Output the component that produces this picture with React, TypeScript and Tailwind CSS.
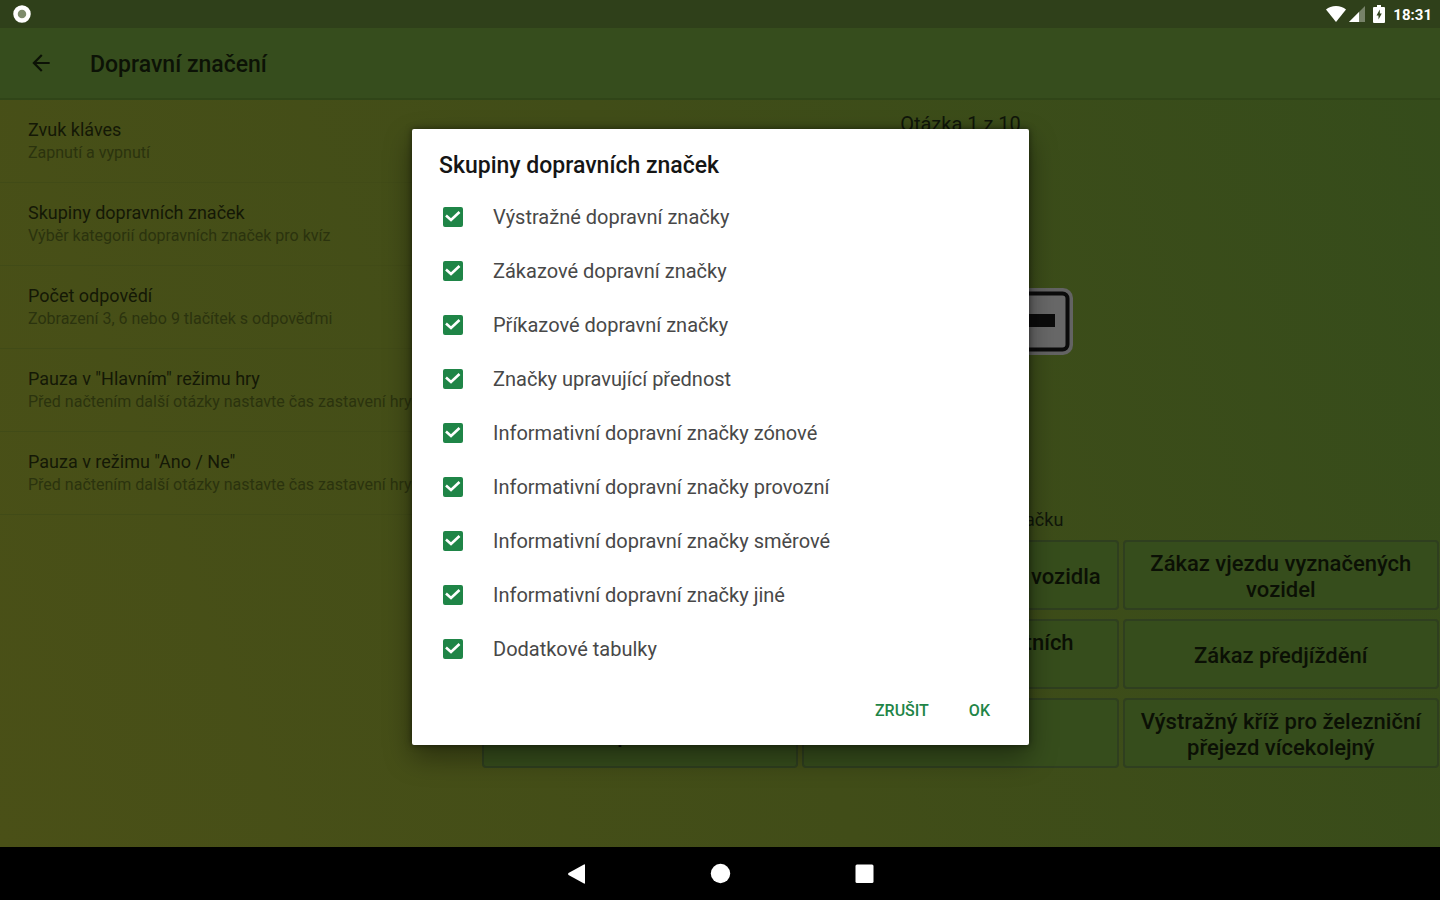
import { useState } from "react";

const settings = [
  { title: "Zvuk kláves", summary: "Zapnutí a vypnutí" },
  { title: "Skupiny dopravních značek", summary: "Výběr kategorií dopravních značek pro kvíz" },
  { title: "Počet odpovědí", summary: "Zobrazení 3, 6 nebo 9 tlačítek s odpověďmi" },
  { title: "Pauza v \"Hlavním\" režimu hry", summary: "Před načtením další otázky nastavte čas zastavení hry" },
  { title: "Pauza v režimu \"Ano / Ne\"", summary: "Před načtením další otázky nastavte čas zastavení hry" },
];

// empty entries keep their cell in the 3x3 grid
const answers = [
  "",
  "Výjimka pro nákladní vozidla",
  "Zákaz vjezdu vyznačených vozidel",
  "",
  "Zákaz vjezdu ostatních\nvozidel",
  "Zákaz předjíždění",
  "Slepá ulice",
  "",
  "Výstražný kříž pro železniční přejezd vícekolejný",
];

const groups = [
  "Výstražné dopravní značky",
  "Zákazové dopravní značky",
  "Příkazové dopravní značky",
  "Značky upravující přednost",
  "Informativní dopravní značky zónové",
  "Informativní dopravní značky provozní",
  "Informativní dopravní značky směrové",
  "Informativní dopravní značky jiné",
  "Dodatkové tabulky",
];

function StatusBar() {
  return (
    <div className="flex h-7 items-center justify-between bg-[#2f401a] pl-3 pr-2 text-white">
      <svg width="20" height="20" viewBox="0 0 20 20" aria-hidden="true">
        <circle cx="10" cy="10" r="6.5" fill="#7e8c6c" stroke="#fff" strokeWidth="4.5" />
      </svg>
      <div className="flex items-center">
        <svg width="22" height="18" viewBox="0 0 22 18" fill="#fff" aria-hidden="true">
          <path d="M11 17 1 4.500C3.500 2.200 7 1 11 1s7.500 1.200 10 3.500z" />
        </svg>
        <svg className="ml-[2px]" width="16" height="16" viewBox="0 0 16 16" aria-hidden="true">
          <path d="M16 0v16H0z" fill="#fff" opacity="0.35" />
          <path d="M10 6v10H0z" fill="#fff" />
        </svg>
        <svg className="mx-2" width="12" height="18" viewBox="0 0 12 18" aria-hidden="true">
          <path d="M4 0h4v2h3q1 0 1 1v14q0 1-1 1H1q-1 0-1-1V3q0-1 1-1h3z" fill="#fff" />
          <path d="M6.800 4.500 3.500 10.500h2v4l3.300-6h-2z" fill="#2f401a" />
        </svg>
        <span className="pt-px text-[15px] leading-5 font-bold">18:31</span>
      </div>
    </div>
  );
}

function AppBar() {
  return (
    <header className="flex h-[72px] items-center border-b-2 border-[#304518] bg-[#364d1d] px-7">
      <button type="button" aria-label="Zpět" className="text-[#0c1206]">
        <svg width="26" height="26" viewBox="0 0 24 24" fill="currentColor" aria-hidden="true">
          <path d="M20 11H7.830l5.590-5.590L12 4l-8 8 8 8 1.410-1.410L7.830 13H20z" />
        </svg>
      </button>
      <h1 className="ml-9 pt-1 text-[23px] leading-7 font-medium text-[#0c1206]">Dopravní značení</h1>
    </header>
  );
}

function Settings() {
  return (
    <nav className="w-1/3 shrink-0">
      {settings.map((item) => (
        <button
          key={item.title}
          type="button"
          className="block h-[83px] w-full border-b border-[#414b17] pl-7 text-left whitespace-nowrap"
        >
          <span className="block text-lg leading-6 text-[#141806]">{item.title}</span>
          <span className="block text-base leading-[22px] text-[#2b330e]">{item.summary}</span>
        </button>
      ))}
    </nav>
  );
}

function Quiz() {
  return (
    <main className="flex flex-1 flex-col pt-3 pr-px pb-[79px] pl-[2px] text-center text-[#10160a]">
      <p className="text-xl leading-6">Otázka 1 z 10</p>
      <div className="flex flex-1 items-center justify-center">
        <svg width="226" height="68" viewBox="0 0 226 68" aria-hidden="true">
          <rect width="225" height="67" rx="10" fill="#636363" />
          <rect x="5.500" y="5.500" width="214" height="56" rx="5" fill="#686868" stroke="#0b0b0b" strokeWidth="4" />
          <rect x="18" y="26" width="189" height="13" fill="#0b0b0b" />
        </svg>
      </div>
      <p className="mb-2 text-lg leading-6">Označte správnou značku</p>
      <div className="grid grid-cols-3 gap-x-1 gap-y-[9px]">
        {answers.map((answer, i) => (
          <button
            key={i}
            type="button"
            className="h-[70px] rounded border-2 border-[#2f3f1f] bg-[#364d1c] px-2 pt-1 text-[22px] leading-[26px] font-medium whitespace-pre-line text-[#0b1005]"
          >
            {answer}
          </button>
        ))}
      </div>
    </main>
  );
}

function GroupRow({ label }: { label: string }) {
  const [checked, setChecked] = useState(true);

  return (
    <label className="flex h-[54px] items-center gap-[30px] pl-[31px]">
      <span className="relative h-5 w-5">
        <input
          type="checkbox"
          checked={checked}
          onChange={() => setChecked(!checked)}
          className="block h-5 w-5 appearance-none rounded-xs border-2 border-[#1f8547] bg-white checked:bg-[#1f8547]"
        />
        {checked && (
          <svg className="pointer-events-none absolute inset-0" width="20" height="20" viewBox="0 0 20 20" aria-hidden="true">
            <path d="M3 8.500 8 13l8.500-8" fill="none" stroke="#fff" strokeWidth="2.600" />
          </svg>
        )}
      </span>
      <span className="text-xl leading-6 text-[#484848]">{label}</span>
    </label>
  );
}

function GroupsDialog() {
  return (
    <div className="absolute inset-x-0 top-7 bottom-[55px] flex items-center justify-center pl-px">
      <div
        role="dialog"
        aria-labelledby="groups-title"
        className="w-[617px] rounded-xs bg-white pt-5 pb-[14px] shadow-[0_12px_28px_rgba(0,0,0,0.4),0_0_6px_rgba(0,0,0,0.5)]"
      >
        <h2 id="groups-title" className="mb-2 pl-[27px] text-[23px] leading-[33px] font-medium text-[#151515]">
          Skupiny dopravních značek
        </h2>
        {groups.map((group) => (
          <GroupRow key={group} label={group} />
        ))}
        <div className="mt-[15px] flex justify-end gap-4 pr-[27px] text-base leading-5 font-medium text-[#1f8547]">
          <button type="button" className="h-10 px-3">ZRUŠIT</button>
          <button type="button" className="h-10 px-3">OK</button>
        </div>
      </div>
    </div>
  );
}

function NavigationBar() {
  return (
    <footer className="flex h-[53px] items-center justify-center gap-[116px] bg-black">
      <button type="button" aria-label="Zpět">
        <svg width="28" height="28" viewBox="0 0 28 28" fill="#fff" aria-hidden="true">
          <path d="M23 5v18q0 1-1 .5L6.500 15q-1-1 0-2L22 4.500q1-.5 1 .5z" />
        </svg>
      </button>
      <button type="button" aria-label="Domů">
        <svg width="28" height="28" viewBox="0 0 28 28" fill="#fff" aria-hidden="true">
          <circle cx="14.500" cy="13.500" r="9.700" />
        </svg>
      </button>
      <button type="button" aria-label="Přehled">
        <svg width="28" height="28" viewBox="0 0 28 28" fill="#fff" aria-hidden="true">
          <rect x="5.500" y="4.500" width="18" height="18.500" rx="1.500" />
        </svg>
      </button>
    </footer>
  );
}

export default function App() {
  return (
    <div className="relative flex min-h-screen flex-col font-['Roboto',sans-serif]">
      <StatusBar />
      <AppBar />
      <div className="flex flex-1 bg-linear-[70deg,#4a5017,#414d18_50%,#354c1b]">
        <Settings />
        <Quiz />
      </div>
      <NavigationBar />
      <GroupsDialog />
    </div>
  );
}
